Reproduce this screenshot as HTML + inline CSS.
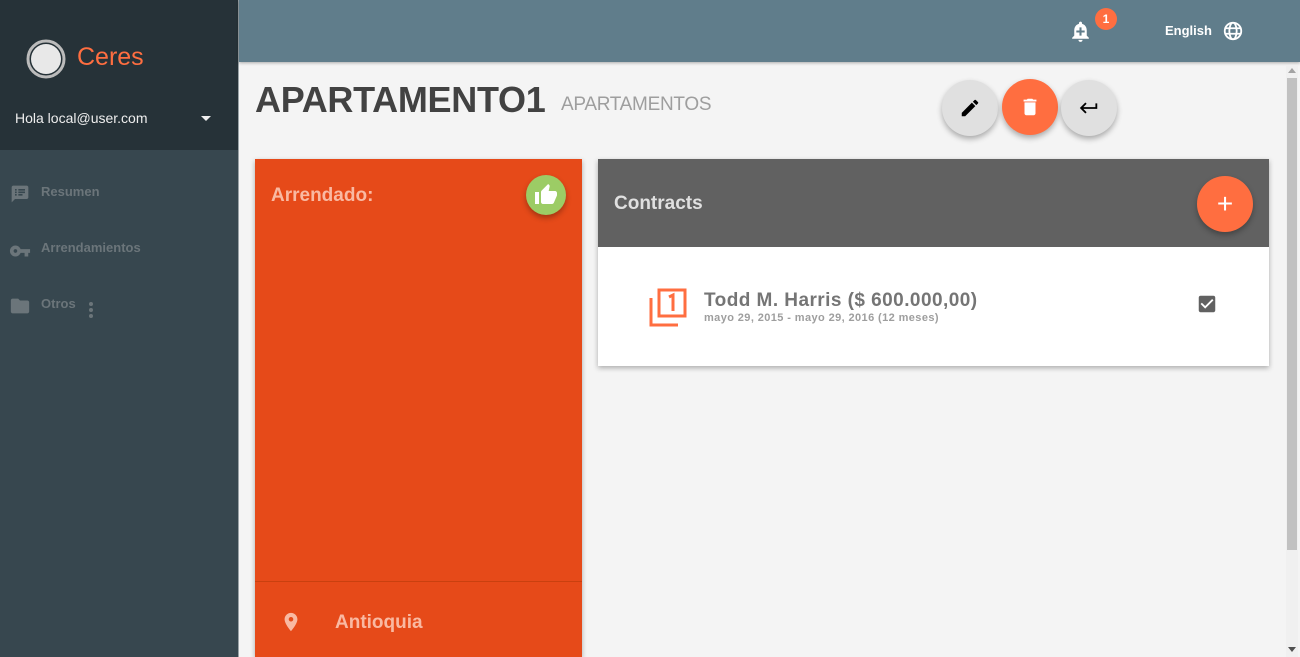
<!DOCTYPE html>
<html><head><meta charset="utf-8"><style>
*{margin:0;padding:0;box-sizing:border-box}
body{width:1300px;height:657px;overflow:hidden;font-family:"Liberation Sans",Arial,sans-serif;background:#f4f4f4;position:relative}
.abs{position:absolute}
.side{left:0;top:0;width:238px;height:657px;background:#37474f}
.sidetop{left:0;top:0;width:238px;height:150px;background:#263238}
.nav{color:#6b757a;font-weight:bold;font-size:13px}
.fab{border-radius:50%;box-shadow:0 3px 6px rgba(0,0,0,.3);display:flex;align-items:center;justify-content:center}
</style></head><body>
<div class="abs side"></div>
<div class="abs sidetop"></div>
<div class="abs" style="left:238px;top:0;width:1px;height:657px;background:#9aa3a7"></div>
<svg class="abs" style="left:25px;top:38px" width="42" height="42" viewBox="0 0 42 42"><circle cx="21" cy="21" r="18" fill="none" stroke="#bbb" stroke-width="3"/><circle cx="21" cy="21" r="15" fill="#e8e8e8"/></svg>
<div class="abs" style="left:77px;top:43px;font-size:25px;color:#ff6e40">Ceres</div>
<div class="abs" style="left:15px;top:110px;font-size:14px;color:#eee">Hola local@user.com</div>
<div class="abs" style="left:201px;top:116px;border-left:5px solid transparent;border-right:5px solid transparent;border-top:5px solid #eee"></div>
<svg class="abs" style="left:10px;top:184px" width="20" height="20" viewBox="0 0 24 24"><path fill="#6b757a" d="M20 2H4c-1.1 0-2 .9-2 2v18l4-4h14c1.1 0 2-.9 2-2V4c0-1.1-.9-2-2-2zM8 14H6v-2h2v2zm0-3H6V9h2v2zm0-3H6V6h2v2zm7 6h-5v-2h5v2zm3-3h-8V9h8v2zm0-3h-8V6h8v2z"/></svg>
<div class="abs nav" style="left:41px;top:184px">Resumen</div>
<svg class="abs" style="left:9px;top:240px" width="22" height="22" viewBox="0 0 24 24"><path fill="#6b757a" d="M12.65 10C11.830 7.67 9.61 6 7 6c-3.31 0-6 2.69-6 6s2.69 6 6 6c2.61 0 4.83-1.67 5.65-4H17v4h4v-4h2v-4H12.65zM7 14c-1.1 0-2-.9-2-2s.9-2 2-2 2 .9 2 2-.9 2-2 2z"/></svg>
<div class="abs nav" style="left:41px;top:240px">Arrendamientos</div>
<svg class="abs" style="left:9px;top:295px" width="22" height="22" viewBox="0 0 24 24"><path fill="#6b757a" d="M10 4H4c-1.1 0-2 .9-2 2v12c0 1.1.9 2 2 2h16c1.1 0 2-.9 2-2V8c0-1.1-.9-2-2-2h-8l-2-2z"/></svg>
<div class="abs nav" style="left:41px;top:296px">Otros</div>
<svg class="abs" style="left:88px;top:302px" width="6" height="16"><circle cx="3" cy="2" r="2" fill="#6b757a"/><circle cx="3" cy="8" r="2" fill="#6b757a"/><circle cx="3" cy="14" r="2" fill="#6b757a"/></svg>

<div class="abs" style="left:239px;top:0;width:1061px;height:62px;background:#607d8b;box-shadow:0 1px 3px rgba(0,0,0,.3)"></div>
<svg class="abs" style="left:1068px;top:19px" width="25" height="25" viewBox="0 0 24 24"><path fill="#fff" d="M12 22c1.1 0 2-.9 2-2h-4c0 1.1.9 2 2 2zm6-6v-5c0-3.07-1.640-5.64-4.5-6.32V4c0-.83-.67-1.5-1.5-1.5s-1.5.67-1.5 1.5v.68C7.63 5.36 6 7.92 6 11v5l-2 2v1h16v-1l-2-2zm-2-3h-3v3h-2v-3H8v-2h3V8h2v3h3v2z"/></svg>
<div class="abs" style="left:1095px;top:8px;width:22px;height:22px;border-radius:50%;background:#ff6e40;color:#fff;font-size:12px;font-weight:bold;text-align:center;line-height:22px">1</div>
<div class="abs" style="left:1165px;top:23px;font-size:13px;font-weight:bold;color:#fff">English</div>
<svg class="abs" style="left:1222px;top:20px" width="22" height="22" viewBox="0 0 24 24"><g fill="none" stroke="#fff" stroke-width="2"><circle cx="12" cy="12" r="9"/><ellipse cx="12" cy="12" rx="4" ry="9"/><path d="M3 9h18M3 15h18"/></g></svg>

<div class="abs" style="left:1286px;top:66px;width:12px;height:591px;background:#f0f0f0"></div>
<div class="abs" style="left:1287px;top:78px;width:10px;height:472px;background:#c1c1c1"></div>
<div class="abs" style="left:1288px;top:68px;border-left:4px solid transparent;border-right:4px solid transparent;border-bottom:5px solid #a3a3a3"></div>
<div class="abs" style="left:1288px;top:647px;border-left:4px solid transparent;border-right:4px solid transparent;border-top:5px solid #505050"></div>

<div class="abs" style="left:255px;top:79px;font-size:36px;font-weight:bold;color:#424242;letter-spacing:-0.3px">APARTAMENTO1</div>
<div class="abs" style="left:561px;top:94px;font-size:19px;color:#9e9e9e;letter-spacing:-0.3px">APARTAMENTOS</div>

<div class="abs fab" style="left:942px;top:80px;width:56px;height:56px;background:#e0e0e0"><svg width="22" height="22" viewBox="0 0 24 24"><path d="M3 17.25V21h3.75L17.81 9.94l-3.75-3.75L3 17.25zM20.71 7.04a1 1 0 000-1.41l-2.34-2.34a1 1 0 00-1.41 0l-1.83 1.83 3.75 3.75 1.83-1.83z"/></svg></div>
<div class="abs fab" style="left:1002px;top:79px;width:56px;height:56px;background:#ff6e40"><svg width="22" height="22" viewBox="0 0 24 24"><path fill="#fff" d="M6 19c0 1.1.9 2 2 2h8c1.1 0 2-.9 2-2V7H6v12zM19 4h-3.5l-1-1h-5l-1 1H5v2h14V4z"/></svg></div>
<div class="abs fab" style="left:1061px;top:80px;width:56px;height:56px;background:#e0e0e0"><svg width="22" height="22" viewBox="0 0 24 24"><path d="M19 7v4H5.83l3.58-3.59L8 6l-6 6 6 6 1.41-1.41L5.83 13H21V7z"/></svg></div>

<div class="abs" style="left:255px;top:159px;width:327px;height:498px;background:#e64a19;box-shadow:0 2px 5px rgba(0,0,0,.3)"></div>
<div class="abs" style="left:271px;top:185px;font-size:19px;font-weight:bold;color:#f9b9a2">Arrendado:</div>
<div class="abs fab" style="left:526px;top:175px;width:40px;height:40px;background:#9ccc65"><svg width="24" height="24" viewBox="0 0 24 24"><path fill="#fff" d="M1 21h4V9H1v12zm22-11c0-1.1-.9-2-2-2h-6.31l.95-4.57.03-.32c0-.41-.17-.79-.44-1.06L14.17 1 7.59 7.59C7.22 7.95 7 8.45 7 9v10c0 1.1.9 2 2 2h9c.83 0 1.54-.5 1.84-1.22l3.020-7.05c.09-.23.14-.47.14-.73v-2z"/></svg></div>
<div class="abs" style="left:255px;top:581px;width:327px;height:1px;background:#c9400f"></div>
<svg class="abs" style="left:280px;top:610px" width="22" height="24" viewBox="0 0 24 24"><path fill="#f9b9a2" d="M12 2C8.13 2 5 5.13 5 9c0 5.25 7 13 7 13s7-7.75 7-13c0-3.87-3.13-7-7-7zm0 9.5a2.5 2.5 0 010-5 2.5 2.5 0 010 5z"/></svg>
<div class="abs" style="left:335px;top:612px;font-size:19px;font-weight:bold;color:#f9b9a2">Antioquia</div>

<div class="abs" style="left:598px;top:159px;width:671px;height:207px;background:#fff;box-shadow:0 2px 5px rgba(0,0,0,.3)"></div>
<div class="abs" style="left:598px;top:159px;width:671px;height:88px;background:#616161"></div>
<div class="abs" style="left:614px;top:193px;font-size:19px;font-weight:bold;color:#e0e0e0">Contracts</div>
<div class="abs fab" style="left:1197px;top:176px;width:56px;height:56px;background:#ff6e40;color:#fff;font-size:28px">+</div>
<svg class="abs" style="left:648px;top:288px" width="40" height="40" viewBox="0 0 40 40"><g fill="none" stroke="#ff6e40" stroke-width="3"><rect x="11" y="2" width="26" height="26"/><path d="M3 10v27h27"/></g><path d="M21 9l4-2v16" fill="none" stroke="#ff6e40" stroke-width="3"/></svg>
<div class="abs" style="left:704px;top:290px;font-size:19px;font-weight:bold;color:#757575;letter-spacing:0.45px">Todd M. Harris ($ 600.000,00)</div>
<div class="abs" style="left:704px;top:312px;font-size:11px;font-weight:bold;color:#9e9e9e;letter-spacing:0.4px">mayo 29, 2015 - mayo 29, 2016 (12 meses)</div>
<svg class="abs" style="left:1196px;top:293px" width="22" height="22" viewBox="0 0 24 24"><path fill="#616161" d="M19 3H5c-1.11 0-2 .9-2 2v14c0 1.1.89 2 2 2h14c1.11 0 2-.9 2-2V5c0-1.1-.89-2-2-2zm-9 14l-5-5 1.41-1.41L10 14.17l7.59-7.59L19 8l-9 9z"/></svg>
</body></html>
